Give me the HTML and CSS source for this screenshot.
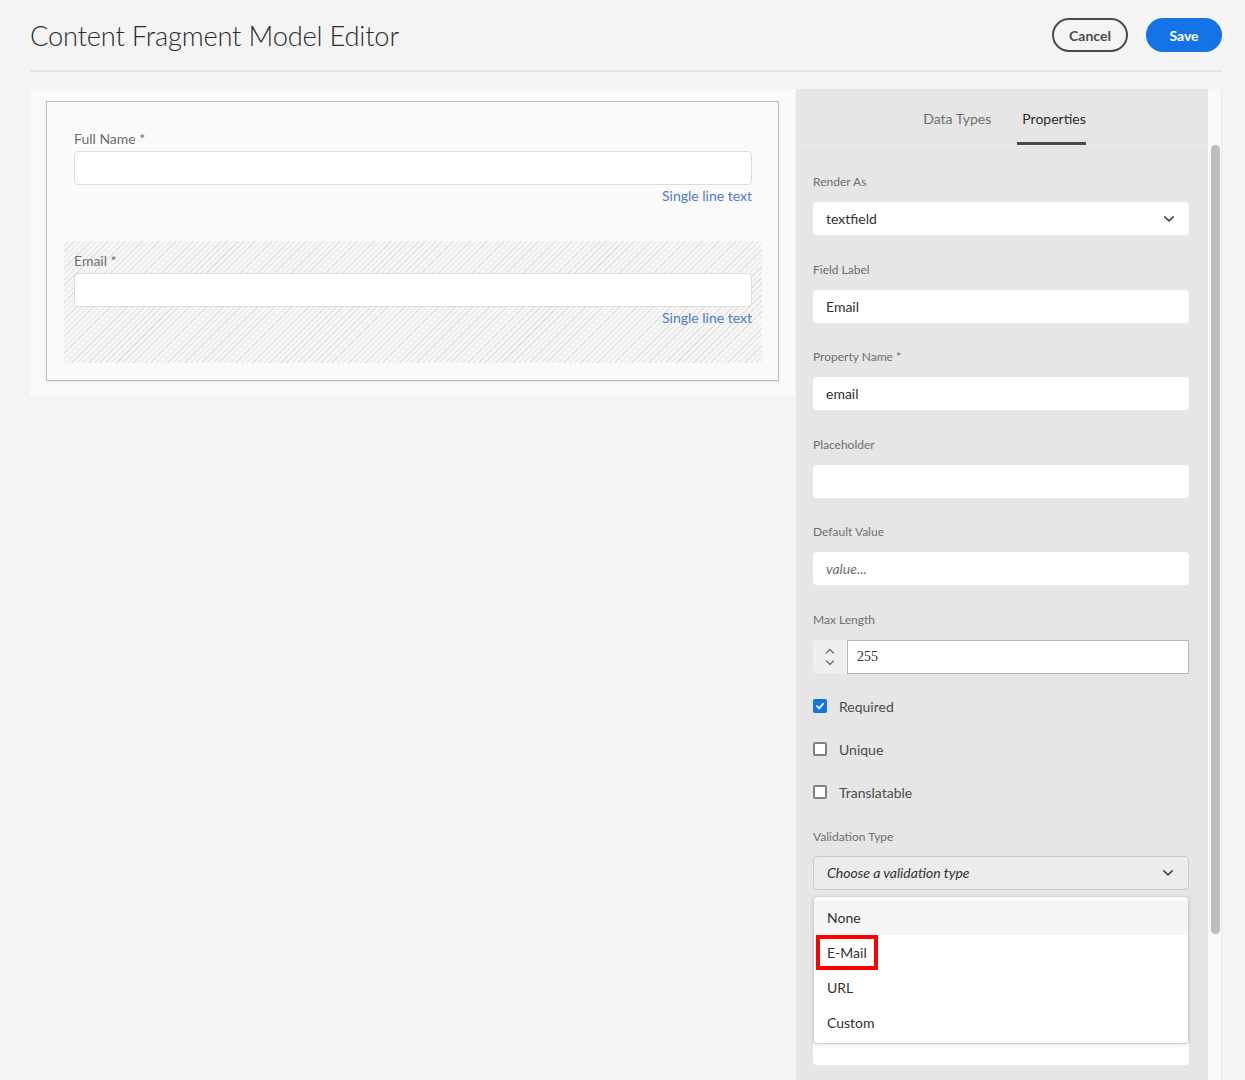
FILE: index.html
```html
<!DOCTYPE html>
<html>
<head>
<meta charset="utf-8">
<link rel="stylesheet" href="styles.css">
</head>
<body>
<header class="topbar">
  <h1 class="title">Content Fragment Model Editor</h1>
  <div class="actions">
    <button class="btn btn-cancel">Cancel</button>
    <button class="btn btn-save">Save</button>
  </div>
</header>
<main class="workspace">
  <section class="canvas">
    <div class="model-box">
      <div class="model-field">
        <div class="mf-label">Full Name *</div>
        <div class="mf-input"></div>
        <div class="mf-type">Single line text</div>
      </div>
      <div class="model-field selected">
        <div class="mf-label">Email *</div>
        <div class="mf-input"></div>
        <div class="mf-type">Single line text</div>
      </div>
    </div>
  </section>
  <aside class="panel">
    <nav class="tabs">
      <div class="tab">Data Types</div>
      <div class="tab active">Properties</div>
    </nav>
    <div class="form">
      <div class="group">
        <div class="label">Render As</div>
        <div class="control select">
          <span>textfield</span>
          <svg class="chev" width="12" height="8" viewBox="0 0 12 8"><path d="M1.8 1.8 L6 5.8 L10.2 1.8" fill="none" stroke="#4b4b4b" stroke-width="1.7" stroke-linecap="round" stroke-linejoin="round"/></svg>
        </div>
      </div>
      <div class="group">
        <div class="label">Field Label</div>
        <div class="control">Email</div>
      </div>
      <div class="group">
        <div class="label">Property Name *</div>
        <div class="control">email</div>
      </div>
      <div class="group">
        <div class="label">Placeholder</div>
        <div class="control"></div>
      </div>
      <div class="group">
        <div class="label">Default Value</div>
        <div class="control placeholder">value...</div>
      </div>
      <div class="group last">
        <div class="label">Max Length</div>
        <div class="stepper">
          <div class="step-btns">
            <svg width="10" height="6" viewBox="0 0 10 6"><path d="M1.5 5 L5 1.5 L8.5 5" fill="none" stroke="#6e6e6e" stroke-width="1.3" stroke-linecap="round" stroke-linejoin="round"/></svg>
            <svg width="10" height="6" viewBox="0 0 10 6"><path d="M1.5 1 L5 4.5 L8.5 1" fill="none" stroke="#6e6e6e" stroke-width="1.3" stroke-linecap="round" stroke-linejoin="round"/></svg>
          </div>
          <div class="step-input">255</div>
        </div>
      </div>
      <div class="checks">
        <div class="check-row">
          <span class="box checked"><svg width="10" height="10" viewBox="0 0 10 10"><path d="M2 5.2 L4.2 7.4 L8.2 2.6" fill="none" stroke="#fff" stroke-width="1.8" stroke-linecap="round" stroke-linejoin="round"/></svg></span>
          <span class="check-label">Required</span>
        </div>
        <div class="check-row">
          <span class="box"></span>
          <span class="check-label">Unique</span>
        </div>
        <div class="check-row">
          <span class="box"></span>
          <span class="check-label">Translatable</span>
        </div>
      </div>
      <div class="group vt">
        <div class="label">Validation Type</div>
        <div class="select-wrap">
          <div class="control select open">
            <span class="italic">Choose a validation type</span>
            <svg class="chev" width="12" height="8" viewBox="0 0 12 8"><path d="M1.8 1.8 L6 5.8 L10.2 1.8" fill="none" stroke="#4b4b4b" stroke-width="1.7" stroke-linecap="round" stroke-linejoin="round"/></svg>
          </div>
          <ul class="menu">
            <li class="item hover">None</li>
            <li class="item"><span class="mark">E-Mail</span></li>
            <li class="item">URL</li>
            <li class="item">Custom</li>
          </ul>
        </div>
      </div>
      <div class="control hidden-next"></div>
    </div>
  </aside>
  <div class="track"><div class="thumb"></div></div>
</main>
</body>
</html>
```

FILE: styles.css
```css
* { box-sizing: border-box; }
html, body { margin: 0; padding: 0; }
body {
  background: #f4f4f4;
  font-family: "Lato", "Noto Sans", sans-serif;
  color: #323232;
  width: 1245px;
  height: 1080px;
  overflow: hidden;
}
.topbar {
  height: 72px;
  margin: 0 23px 0 30px;
  border-bottom: 2px solid #e4e4e4;
  display: flex;
  align-items: center;
  justify-content: space-between;
}
.title {
  margin: 0;
  font-size: 27.3px;
  font-weight: 300;
  color: #2c2c2c;
  letter-spacing: -0.2px;
}
.actions { display: flex; gap: 18px; }
.btn {
  width: 76px;
  height: 34px;
  border-radius: 17px;
  font-family: "Lato", sans-serif;
  font-size: 14px;
  font-weight: 700;
  cursor: pointer;
}
.btn-cancel { background: transparent; border: 2px solid #4b4b4b; color: #4b4b4b; }
.btn-save { background: #1473e6; border: 2px solid #1473e6; color: #fff; }

.workspace {
  display: flex;
  align-items: flex-start;
  margin: 17px 23px 0 30px;
}
.canvas {
  width: 765px;
  margin-right: 1px;
  background: #fafafa;
  padding: 12px 16px 16px 16px;
}
.model-box {
  border: 1px solid #bdbdbd;
  background: #fafafa;
  box-shadow: 0 1px 3px rgba(0,0,0,0.08);
  padding: 17px 16px 17px 17px;
}
.model-field {
  height: 122px;
  padding: 11px 10px 0 10px;
}
.model-field.selected {
  background: repeating-linear-gradient(135deg, #f6f6f6 0px, #f6f6f6 3px, #e2e2e2 3px, #e2e2e2 4px);
}
.mf-label { font-size: 14px; line-height: 18px; color: #6e6e6e; margin-bottom: 3px; }
.mf-input {
  height: 34px;
  background: #fff;
  border: 1px solid #dcdcdc;
  border-radius: 4px;
}
.mf-type {
  text-align: right;
  font-size: 14px;
  line-height: 22px;
  color: #4f7cc9;
}

.panel {
  width: 412px;
  height: 991px;
  background: #e6e6e6;
  position: relative;
}
.tabs {
  height: 57px;
  border-bottom: 1px solid #ececec;
  display: flex;
  justify-content: center;
  gap: 26px;
}
.tab {
  height: 57px;
  line-height: 60px;
  font-size: 14px;
  color: #6e6e6e;
  padding-left: 5px;
  border-bottom: 3px solid transparent;
}
.tab.active {
  color: #2c2c2c;
  border-bottom-color: #4b4b4b;
  height: 56px;
  line-height: 59px;
}
.form { padding: 27px 19px 0 17px; }
.group { height: 87.6px; }
.group.last { height: auto; }
.label { font-size: 12px; line-height: 18px; color: #6e6e6e; margin-bottom: 11px; }
.control {
  height: 33px;
  background: #fff;
  border-radius: 4px;
  padding: 0 13px;
  font-size: 14px;
  line-height: 33px;
  color: #323232;
}
.placeholder { font-style: italic; color: #6e6e6e; }
.select { display: flex; align-items: center; justify-content: space-between; padding-right: 14px; }
.select.open {
  height: 34px;
  background: #ececec;
  border: 1px solid #cacaca;
}
.italic { font-style: italic; }
.stepper { display: flex; height: 34px; }
.step-btns {
  width: 34px;
  background: #efefef;
  border-radius: 4px 0 0 4px;
  display: flex;
  flex-direction: column;
  align-items: center;
  justify-content: center;
  gap: 6px;
}
.step-input {
  flex: 1;
  background: #fff;
  border: 1px solid #b8b8b8;
  font-family: "Liberation Serif", serif;
  font-size: 14px;
  line-height: 32px;
  padding-left: 9px;
  color: #323232;
}
.checks { margin-top: 11px; }
.check-row { height: 43px; display: flex; align-items: center; }
.box {
  width: 14px;
  height: 14px;
  border: 2px solid #808080;
  border-radius: 2px;
  background: #fff;
  margin-right: 12px;
  display: flex;
  align-items: center;
  justify-content: center;
}
.box.checked { background: #1473e6; border-color: #1473e6; }
.check-label { font-size: 14px; color: #4b4b4b; }
.vt { margin-top: 14px; height: auto; }
.vt .label { margin-bottom: 10px; }
.select-wrap { position: relative; }
.menu {
  position: absolute;
  left: 0;
  right: 0;
  top: 40px;
  margin: 0;
  padding: 3px 0;
  list-style: none;
  background: #fff;
  border: 1px solid #cfcfcf;
  border-radius: 4px;
  box-shadow: 0 1px 4px rgba(0,0,0,0.12);
  z-index: 2;
}
.item {
  height: 35px;
  display: flex;
  align-items: center;
  padding-left: 13px;
  font-size: 14px;
  color: #323232;
}
.item.hover { background: #f5f5f5; }
.mark {
  display: inline-flex;
  align-items: center;
  height: 35px;
  margin-left: -11px;
  padding: 0 7px;
  border: 4px solid #ff0000;
}
.hidden-next { margin-top: 141px; height: 34px; }

.track {
  width: 14px;
  height: 991px;
  background: #f9f9f9;
  border-right: 1px solid #ebebeb;
  padding: 56px 1px 0 3px;
}
.thumb {
  width: 9px;
  height: 789px;
  background: #bdbdbd;
  border-radius: 5px;
}
```
